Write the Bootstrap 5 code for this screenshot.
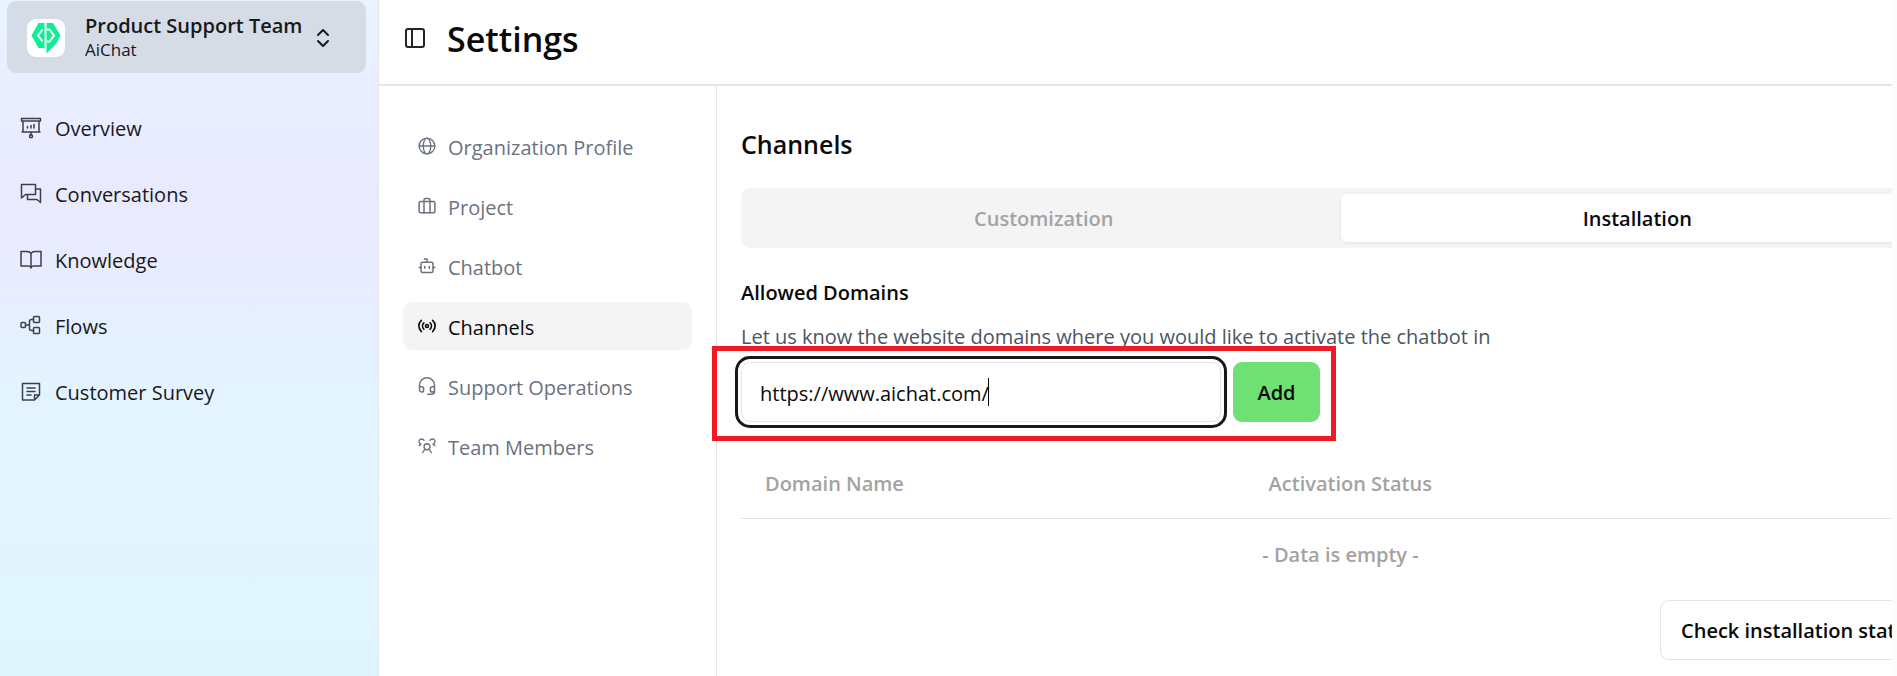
<!DOCTYPE html>
<html lang="en">
<head>
<meta charset="utf-8">
<meta name="viewport" content="width=device-width, initial-scale=1">
<title>Settings</title>
<link href="https://cdn.jsdelivr.net/npm/bootstrap@5.3.0/dist/css/bootstrap.min.css" rel="stylesheet">
<style>
  :root { --line: #e5e5e5; --soft: #f4f4f4; --ink: #0a0a0a; }
  body { font-family: "Open Sans", "Noto Sans", sans-serif; font-size: 20px; line-height: 30px; color: var(--ink); background: #fcfcfc; }
  svg { flex: none; fill: none; stroke: currentColor; stroke-linecap: round; stroke-linejoin: round; }
  .app-side { flex: 0 0 379px; border-right: 1px solid var(--line);
    background: linear-gradient(180deg, #e9f4ff 0%, #e9efff 11%, #eaeaff 28%, #e9ebfe 36%, #e4f2ff 54%, #e3f4ff 66%, #dff5fe 100%); }
  .team-switch { margin: 1px 12px 22px 7px; padding: 13px 36px 11px 20px; background: #d5dce6; border: 0; border-radius: 9px; color: #18181b; line-height: 24px; }
  .team-logo { width: 38px; height: 38px; border-radius: 9px; background: #fff; margin-right: 20px; flex: none; }
  .team-sub { font-size: 17px; }
  .side-link { height: 66px; padding-left: 20px; gap: 13px; color: #18181b; text-decoration: none; }
  .side-link svg { color: #3f3f46; }
  .side-link span { padding-top: 2px; }
  .set-link span { padding-top: 4px; }
  .app-main { margin-right: 5px; min-width: 0; background: #fff; }
  .top-bar { height: 86px; border-bottom: 2px solid var(--line); padding: 0 0 8px 26px; gap: 22px; }
  .page-title { font-size: 34px; line-height: 48px; font-weight: 600; margin: 0; padding-top: 2px; }
  .settings-nav { flex: 0 0 338px; border-right: 1px solid var(--line); padding: 36px 24px; gap: 12px; }
  .set-link { height: 48px; padding-left: 15px; gap: 12px; border-radius: 9px; color: #6b7280; text-decoration: none; }
  .set-link.current { background: var(--soft); color: var(--ink); }
  .pane { min-width: 0; margin-right: -48px; padding: 38px 0 16px 24px; }
  .pane-title { font-size: 25px; line-height: 40px; font-weight: 600; margin: 0 0 24px; }
  .tab-strip { padding: 6px; background: var(--soft); border-radius: 9px; margin-bottom: 30px; }
  .tab-strip button { flex: 1 1 0; height: 48px; padding: 2px 0 0; border: 0; border-radius: 6px; background: transparent; color: #a3a3a3; font-weight: 600; }
  .tab-strip button.current { background: #fff; color: var(--ink); box-shadow: 0 1px 3px rgba(0,0,0,.08); }
  .field-label { display: block; font-weight: 600; margin-bottom: 14px; }
  .hint { color: #4b5563; margin-bottom: 10px; }
  .domain-row { gap: 12px; }
  .domain-box { width: 480px; }
  .domain-box input { width: 100%; height: 60px; border: 1px solid var(--line); border-radius: 9px; padding: 2px 18px 0; outline: 3px solid #18181b; outline-offset: 3px; color: var(--ink); caret-color: transparent; }
  .caret { left: 247px; top: 16px; width: 1px; height: 28px; background: #000; }
  .btn-add { height: 60px; width: 87px; padding: 2px 0 0; border: 0; border-radius: 9px; background: #6fe073; color: var(--ink); font-weight: 600; }
  .callout-frame { inset: -16px -16px -19px -29px; border: 5px solid #ed1c24; pointer-events: none; }
  .domains { width: 100%; margin: 28px 0 9px; color: #a3a3a3; font-weight: 600; }
  .domains th { padding: 19px 24px; border-bottom: 1px solid var(--line); font-weight: 600; }
  .domains td { padding: 21px 24px; text-align: center; }
  .btn-status { height: 60px; width: 280px; border: 1px solid var(--line); border-radius: 9px; background: #fff; color: var(--ink); font-weight: 600; white-space: nowrap; padding: 2px 0 0 20px; text-align: left; }
</style>
</head>
<body>
<div class="d-flex min-vh-100 overflow-hidden">
  <aside class="app-side d-flex flex-column">
    <button class="team-switch d-flex align-items-center text-start" type="button">
      <span class="team-logo d-flex align-items-center justify-content-center">
        <svg width="30" height="32" viewBox="0 0 30 32" stroke="none"><path d="M0.500 13.500L7.500 1h6v25h-6zM15.500 1h6.500l7.500 12.500L25 22l-9.500 9.500z" fill="#0eef93" stroke="none"/><path d="M11.500 7.500L7 13.500l4.500 6M15.500 7.500h3l4.500 6-4.500 6h-3" stroke="#fff" stroke-width="2" stroke-linecap="butt" stroke-linejoin="miter"/></svg>
      </span>
      <span class="flex-grow-1 text-nowrap"><span class="d-block fw-semibold">Product Support Team</span><span class="team-sub d-block">AiChat</span></span>
      <svg width="14" height="20" viewBox="0 0 14 20" stroke-width="2"><path d="M2 7l5-5 5 5M2 13l5 5 5-5"/></svg>
    </button>
    <nav class="d-flex flex-column">
      <a class="side-link d-flex align-items-center" href="#"><svg width="22" height="22" viewBox="0 0 22 22" stroke-width="1.5"><path d="M1.500 1.500h19v2.500h-19zM3 4v11h16V4M2 15h18M11 15v3M7.500 11V9.500M11 11V8.500M14 11V7.500"/><circle cx="11" cy="19.300" r="1.500"/></svg><span>Overview</span></a>
      <a class="side-link d-flex align-items-center" href="#"><svg width="22" height="22" viewBox="0 0 22 22" stroke-width="1.500"><path d="M1.500 1.500h14v10H5.500l-4 3.500zM15.500 6h5v13.500L17 16.500H7.500v-5"/></svg><span>Conversations</span></a>
      <a class="side-link d-flex align-items-center" href="#"><svg width="22" height="22" viewBox="0 0 22 22" stroke-width="1.500"><path d="M11 4.500Q10 2.500 7 2.500H1v14.500h7.500q2 0 2.500 2 .5-2 2.500-2H21V2.500h-6Q12 2.500 11 4.500V19"/></svg><span>Knowledge</span></a>
      <a class="side-link d-flex align-items-center" href="#"><svg width="22" height="22" viewBox="0 0 22 22" stroke-width="1.500"><rect x="1" y="7.500" width="4.500" height="5" rx="1"/><rect x="13.500" y="1.500" width="6" height="6" rx="1"/><rect x="13.500" y="12.500" width="6" height="6" rx="1"/><path d="M5.500 10H9.500M13.500 4.500h-2q-2 0-2 2v7q0 2 2 2h2"/></svg><span>Flows</span></a>
      <a class="side-link d-flex align-items-center" href="#"><svg width="22" height="22" viewBox="0 0 22 22" stroke-width="1.500"><path d="M2.500 2.500h17v11.500l-5 5h-12zM14.500 19v-5h5M7 7h8M7 10.500h8M7 14h4"/></svg><span>Customer Survey</span></a>
    </nav>
  </aside>
  <div class="app-main d-flex flex-column flex-grow-1 overflow-hidden">
    <header class="top-bar d-flex align-items-center">
      <button class="btn p-0 border-0 d-flex" type="button" aria-label="Toggle sidebar"><svg width="20" height="20" viewBox="0 0 20 20" stroke-width="2"><rect x="1" y="1" width="18" height="18" rx="2"/><path d="M7 1v18"/></svg></button>
      <h1 class="page-title">Settings</h1>
    </header>
    <div class="d-flex flex-grow-1">
      <nav class="settings-nav d-flex flex-column">
        <a class="set-link d-flex align-items-center" href="#"><svg width="18" height="18" viewBox="0 0 24 24" stroke-width="1.800"><circle cx="12" cy="12" r="10.500"/><ellipse cx="12" cy="12" rx="5" ry="10.500"/><path d="M1.500 12h21"/></svg><span>Organization Profile</span></a>
        <a class="set-link d-flex align-items-center" href="#"><svg width="18" height="18" viewBox="0 0 24 24" stroke-width="2"><rect x="1.500" y="6" width="21" height="15" rx="2"/><path d="M8 21V4q0-2 2-2h4q2 0 2 2v17"/></svg><span>Project</span></a>
        <a class="set-link d-flex align-items-center" href="#"><svg width="18" height="18" viewBox="0 0 24 24" stroke-width="2"><path d="M12 7V2.500H8.500M1.500 14H4M20 14h2.500M9 12.500v2.500M15 12.500v2.500"/><rect x="4" y="7" width="16" height="13.500" rx="2"/></svg><span>Chatbot</span></a>
        <a class="set-link current d-flex align-items-center" href="#" aria-current="page"><svg width="18" height="18" viewBox="0 0 24 24" stroke-width="2.200"><path d="M4.500 19.500C0 15 0 8.500 4.500 4.500M7.800 16.200c-2.300-2.300-2.300-6 0-8.400M16.200 7.800c2.300 2.300 2.300 6 0 8.400M19.500 4.500c4.500 4 4.500 10.500 0 15"/><circle cx="12" cy="12" r="2"/></svg><span>Channels</span></a>
        <a class="set-link d-flex align-items-center" href="#"><svg width="18" height="18" viewBox="0 0 24 24" stroke-width="2"><path d="M2 14v-3a10 10 0 0 1 20 0v8q0 4-4 4h-5M2 13h3q2.500 0 2.500 2.500v2q0 2.500-2.500 2.500t-3-2.500zM22 13h-3q-2.500 0-2.500 2.500v2q0 2.500 2.500 2.500t3-2.500"/></svg><span>Support Operations</span></a>
        <a class="set-link d-flex align-items-center" href="#"><svg width="18" height="18" viewBox="0 0 24 24" stroke-width="1.800"><circle cx="12" cy="13" r="4"/><path d="M6 21l3-4.500M18 21l-3-4.500M1.500 11.500L4 9.500A3.500 3.500 0 1 1 8 4.500M22.500 11.500L20 9.500a3.500 3.500 0 1 0-4-5"/></svg><span>Team Members</span></a>
      </nav>
      <main class="pane flex-grow-1">
        <h2 class="pane-title">Channels</h2>
        <div class="tab-strip d-flex" role="tablist">
          <button type="button" role="tab" aria-selected="false">Customization</button>
          <button type="button" role="tab" class="current" aria-selected="true">Installation</button>
        </div>
        <label class="field-label" for="domain">Allowed Domains</label>
        <p class="hint">Let us know the website domains where you would like to activate the chatbot in</p>
        <div class="domain-row d-inline-flex position-relative align-top">
          <div class="domain-box position-relative">
            <input class="d-block" id="domain" type="text" value="https://www.aichat.com/">
            <span class="caret position-absolute"></span>
          </div>
          <button class="btn-add" type="button">Add</button>
          <span class="callout-frame position-absolute"></span>
        </div>
        <table class="domains">
          <colgroup><col style="width:42%"><col style="width:58%"></colgroup>
          <thead><tr><th scope="col">Domain Name</th><th scope="col">Activation Status</th></tr></thead>
          <tbody><tr><td colspan="2">- Data is empty -</td></tr></tbody>
        </table>
        <div class="d-flex justify-content-end"><button class="btn-status" type="button">Check installation status</button></div>
      </main>
    </div>
  </div>
</div>
<script src="https://cdn.jsdelivr.net/npm/bootstrap@5.3.0/dist/js/bootstrap.bundle.min.js"></script>
</body>
</html>
